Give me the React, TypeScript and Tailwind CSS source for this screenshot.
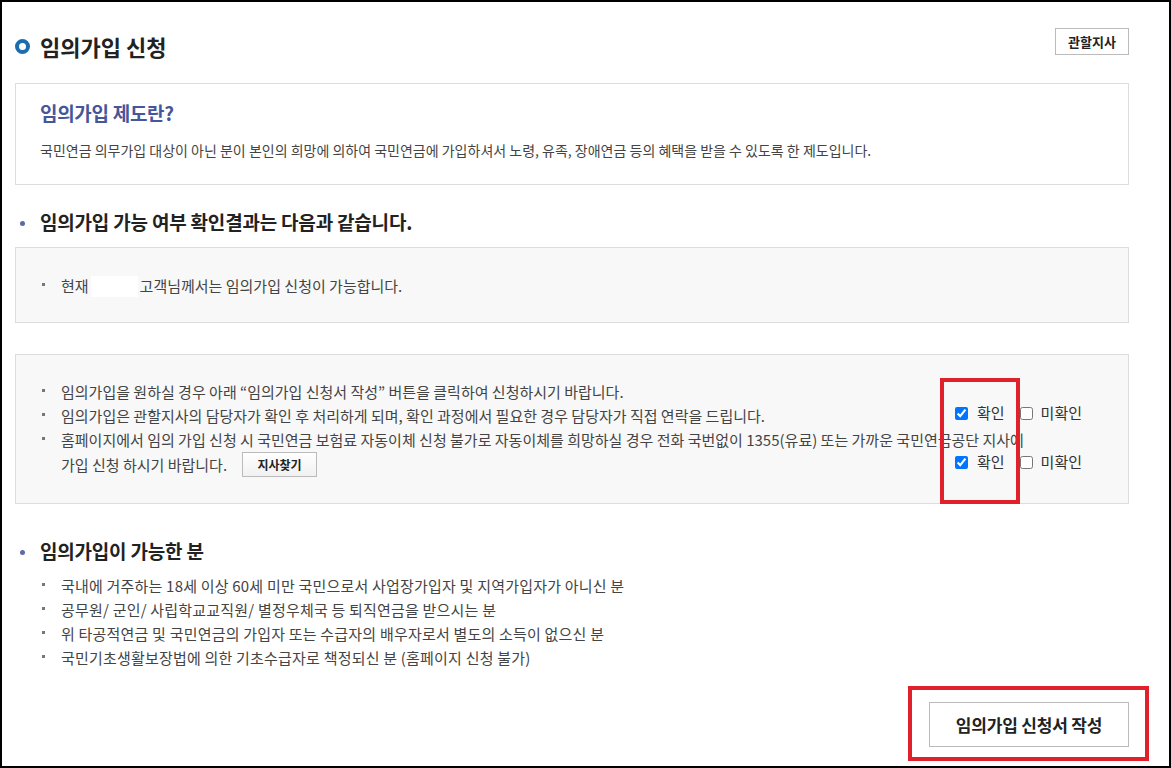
import React from "react";

const font = { fontFamily: '"Noto Sans CJK KR", "Noto Sans", sans-serif' };

function Bullet() {
  return (
    <span className="flex w-[19px] shrink-0 h-[24px] items-start pt-[9px]">
      <span className="block w-[3px] h-[3px] bg-[#777]" />
    </span>
  );
}

function Heading({ children }: { children: React.ReactNode }) {
  return (
    <div className="flex items-center h-[26px]">
      <span className="ml-[5px] w-[5px] h-[5px] rounded-full bg-[#5b6aa8] mt-[3px]" />
      <h2 className="ml-[15px] text-[19px] leading-[26px] font-bold text-[#222] tracking-[-0.2px]">
        {children}
      </h2>
    </div>
  );
}

function CheckRow() {
  return (
    <div className="flex items-center h-[20px] text-[15px] text-[#333]">
      <input type="checkbox" defaultChecked className="w-[13px] h-[13px] m-0 accent-[#0075ff]" />
      <span className="ml-[9px]">확인</span>
      <input type="checkbox" className="ml-[15px] w-[13px] h-[13px] m-0" />
      <span className="ml-[8px]">미확인</span>
    </div>
  );
}

export default function App() {
  return (
    <div
      style={font}
      className="relative w-[1171px] h-[768px] box-border border-2 border-black bg-white overflow-hidden pl-[13px] pr-[40px]"
    >
      {/* title row */}
      <div className="flex justify-between items-start pt-[26px]">
        <div className="flex items-center mt-[3px] h-[30px]">
          <span className="w-[15px] h-[15px] rounded-full border-[4px] border-[#1b6db0] box-border" />
          <h1 className="ml-[10px] text-[22px] leading-[30px] font-bold text-[#222]">
            임의가입 신청
          </h1>
        </div>
        <button className="w-[74px] h-[27px] border border-[#bbb] bg-white text-[13px] font-bold text-[#222]">
          관할지사
        </button>
      </div>

      {/* box 1 */}
      <div className="mt-[22px] border border-[#ddd] bg-white pl-[24px] pt-[16px] pb-[24px]">
        <h3 className="text-[19px] leading-[26px] font-bold text-[#46569a] tracking-[-0.3px]">
          임의가입 제도란?
        </h3>
        <p className="mt-[14px] text-[14px] leading-[20px] text-[#444]">
          국민연금 의무가입 대상이 아닌 분이 본인의 희망에 의하여 국민연금에 가입하셔서 노령, 유족, 장애연금 등의 혜택을 받을 수 있도록 한 제도입니다.
        </p>
      </div>

      <div className="mt-[24px]">
        <Heading>임의가입 가능 여부 확인결과는 다음과 같습니다.</Heading>
      </div>

      {/* box 2 */}
      <div className="mt-[12px] border border-[#ddd] bg-[#f8f8f8] pl-[26px] pt-[26px] pb-[24px]">
        <div className="flex text-[15px] leading-[24px] text-[#444]">
          <Bullet />
          <span className="flex items-center">
            현재
            <span className="inline-block w-[47px] h-[21px] bg-white ml-[2px] mr-[2px]" />
            고객님께서는 임의가입 신청이 가능합니다.
          </span>
        </div>
      </div>

      {/* box 3 */}
      <div className="relative mt-[31px] border border-[#ddd] bg-[#f8f8f8] pl-[26px] pt-[25px] pb-[26px]">
        <ul className="text-[15px] leading-[24px] text-[#444]">
          <li className="flex">
            <Bullet />
            <span>임의가입을 원하실 경우 아래 “임의가입 신청서 작성” 버튼을 클릭하여 신청하시기 바랍니다.</span>
          </li>
          <li className="flex">
            <Bullet />
            <span>임의가입은 관할지사의 담당자가 확인 후 처리하게 되며, 확인 과정에서 필요한 경우 담당자가 직접 연락을 드립니다.</span>
          </li>
          <li className="flex">
            <Bullet />
            <div>
              <div className="whitespace-nowrap">
                홈페이지에서 임의 가입 신청 시 국민연금 보험료 자동이체 신청 불가로 자동이체를 희망하실 경우 전화 국번없이 1355(유료) 또는 가까운 국민연금공단 지사에
              </div>
              <div className="flex items-center h-[25px]">
                <span>가입 신청 하시기 바랍니다.</span>
                <button className="ml-[15px] w-[75px] h-[25px] border border-[#bbb] bg-gradient-to-b from-white to-[#f1f1f1] text-[12px] leading-[23px] font-bold text-[#222]">
                  지사찾기
                </button>
              </div>
            </div>
          </li>
        </ul>
        <div className="absolute left-[939px] top-[48px]">
          <CheckRow />
        </div>
        <div className="absolute left-[939px] top-[97px]">
          <CheckRow />
        </div>
      </div>

      <div className="mt-[34px]">
        <Heading>임의가입이 가능한 분</Heading>
      </div>

      <ul className="mt-[10px] pl-[27px] text-[15px] leading-[24px] text-[#444] tracking-[0.2px]">
        <li className="flex">
          <Bullet />
          <span>국내에 거주하는 18세 이상 60세 미만 국민으로서 사업장가입자 및 지역가입자가 아니신 분</span>
        </li>
        <li className="flex">
          <Bullet />
          <span>공무원/ 군인/ 사립학교교직원/ 별정우체국 등 퇴직연금을 받으시는 분</span>
        </li>
        <li className="flex">
          <Bullet />
          <span>위 타공적연금 및 국민연금의 가입자 또는 수급자의 배우자로서 별도의 소득이 없으신 분</span>
        </li>
        <li className="flex">
          <Bullet />
          <span>국민기초생활보장법에 의한 기초수급자로 책정되신 분 (홈페이지 신청 불가)</span>
        </li>
      </ul>

      <div className="mt-[32px] flex justify-end">
        <button className="w-[200px] h-[45px] border border-[#bbb] bg-white text-[17px] font-bold text-[#222] tracking-[-0.2px]">
          임의가입 신청서 작성
        </button>
      </div>

      {/* red annotation boxes */}
      <div className="absolute left-[938px] top-[376px] w-[80px] h-[126px] border-[4px] border-[#e0202a] pointer-events-none" />
      <div className="absolute left-[906px] top-[684px] w-[241px] h-[75px] border-[4px] border-[#e0202a] pointer-events-none" />
    </div>
  );
}
